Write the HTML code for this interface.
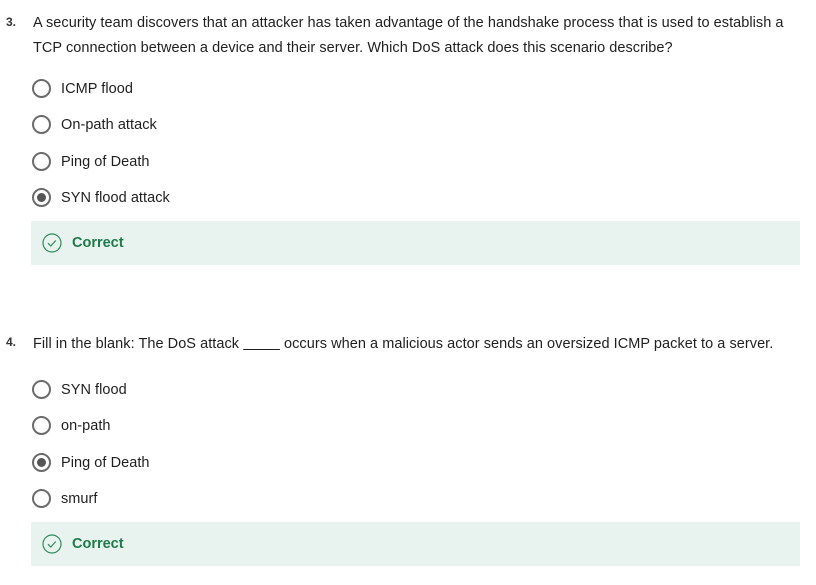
<!DOCTYPE html>
<html><head><style>
body{margin:0;background:#fff;font-family:"Liberation Sans",sans-serif;color:#1f1f1f;width:816px;height:585px;position:relative;overflow:hidden}
.a{position:absolute;white-space:nowrap;font-size:14.5px;letter-spacing:0.05px}
.n{position:absolute;font-weight:bold;font-size:12px;color:#333}
.r{position:absolute;left:32px;width:15px;height:15px;border:2px solid #6b6b6b;border-radius:50%}
.r.s::after{content:"";position:absolute;left:3px;top:3px;width:9px;height:9px;border-radius:50%;background:#555}
.fb{position:absolute;left:31px;width:769px;height:44px;background:#e8f2ee}
.fb svg{position:absolute;left:11px;top:12px}
.fb span{position:absolute;left:41px;top:14px;font-weight:bold;font-size:14.5px;color:#1d7a4a}
</style></head><body>
<div class="n" style="left:6px;top:15px">3.</div>
<div class="a" style="left:33px;top:15px">A security team discovers that an attacker has taken advantage of the handshake process that is used to establish a</div>
<div class="a" style="left:33px;top:40px">TCP connection between a device and their server. Which DoS attack does this scenario describe?</div>
<div class="r" style="top:79px"></div><div class="a" style="left:61px;top:81px">ICMP flood</div>
<div class="r" style="top:115px"></div><div class="a" style="left:61px;top:117px">On-path attack</div>
<div class="r" style="top:152px"></div><div class="a" style="left:61px;top:154px">Ping of Death</div>
<div class="r s" style="top:188px"></div><div class="a" style="left:61px;top:190px">SYN flood attack</div>
<div class="fb" style="top:221px"><svg width="20" height="20" viewBox="0 0 20 20"><circle cx="10" cy="10" r="9" fill="none" stroke="#2e8b5c" stroke-width="1.2"/><path d="M6 10.2l2.8 2.8 5-5.5" fill="none" stroke="#2e8b5c" stroke-width="1.2"/></svg><span>Correct</span></div>
<div class="n" style="left:6px;top:335px">4.</div>
<div class="a" style="left:33px;top:336px">Fill in the blank: The DoS attack <span style="text-decoration:underline">&nbsp;&nbsp;&nbsp;&nbsp;&nbsp;&nbsp;&nbsp;&nbsp;&nbsp;</span> occurs when a malicious actor sends an oversized ICMP packet to a server.</div>
<div class="r" style="top:380px"></div><div class="a" style="left:61px;top:382px">SYN flood</div>
<div class="r" style="top:416px"></div><div class="a" style="left:61px;top:418px">on-path</div>
<div class="r s" style="top:453px"></div><div class="a" style="left:61px;top:455px">Ping of Death</div>
<div class="r" style="top:489px"></div><div class="a" style="left:61px;top:491px">smurf</div>
<div class="fb" style="top:522px"><svg width="20" height="20" viewBox="0 0 20 20"><circle cx="10" cy="10" r="9" fill="none" stroke="#2e8b5c" stroke-width="1.2"/><path d="M6 10.2l2.8 2.8 5-5.5" fill="none" stroke="#2e8b5c" stroke-width="1.2"/></svg><span>Correct</span></div>
</body></html>
